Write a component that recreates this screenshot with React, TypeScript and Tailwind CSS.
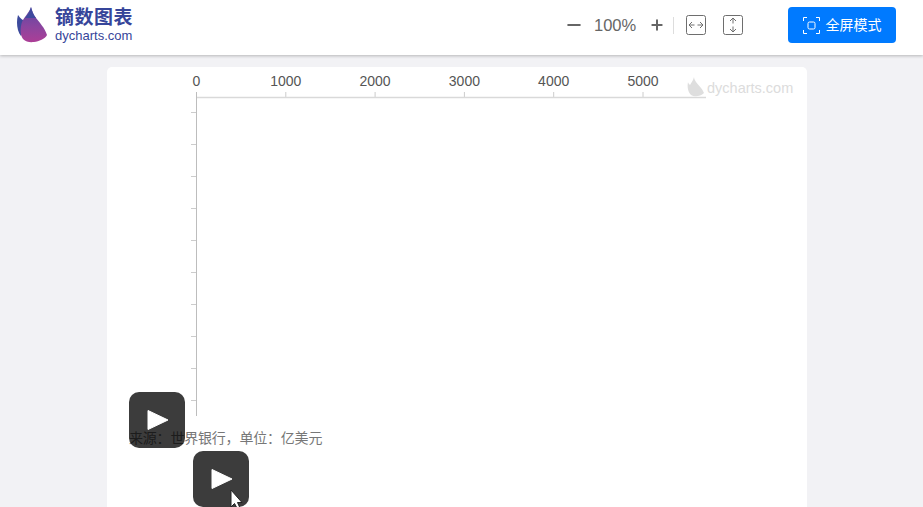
import { Minus, Plus } from "lucide-react";

const xTicks = [0, 1000, 2000, 3000, 4000, 5000];
const yTicks = [112, 144, 176, 208, 240, 272, 304, 336, 368, 400];
const cjk = "font-['Liberation_Sans','Noto_Sans_CJK_SC',sans-serif]";

function Logo() {
  return (
    <div className="flex items-center">
      <svg width="31" height="36" viewBox="0 0 31 36" className="mr-[7px]">
        <defs>
          <linearGradient id="logoFill" x1="0" y1="0" x2="0" y2="1">
            <stop offset="0" stopColor="#5a48a3" />
            <stop offset="0.55" stopColor="#8a459f" />
            <stop offset="1" stopColor="#ac3e96" />
          </linearGradient>
        </defs>
        <path d="M1 8C-1 15 0 24 4 29L10 14C6 14 3 11 1 8Z" fill="#3c4a9c" />
        <path d="M14 0C12 6 7 10 5 15C3 21 3 28 6 32C9 35 13 35.500 17 35C22 34.500 28 32 30 28C28 21 22 15 19 11C16 7 15 4 14 0Z" fill="url(#logoFill)" />
        <path d="M14 0C15 4 16 7 19 11L8 11C11 8 13 4 14 0Z" fill="#3f4a9e" />
      </svg>
      <div className="flex flex-col">
        <span className={`text-[19px] font-bold leading-[22px] tracking-[0.5px] text-[#36459a] ${cjk}`}>镝数图表</span>
        <span className="font-['Liberation_Sans',sans-serif] text-[13px] leading-[14px] text-[#36459a]">dycharts.com</span>
      </div>
    </div>
  );
}

function FitIcon({ vertical }: { vertical?: boolean }) {
  return (
    <svg width="20" height="20" viewBox="0 0 20 20" fill="none" stroke="#6e6e6e" strokeWidth="1">
      <rect x="0.5" y="0.5" width="19" height="19" rx="2" />
      {vertical ? (
        <path d="M10 3V8.500M7 6L10 3L13 6M10 11.500V17M7 14L10 17L13 14" />
      ) : (
        <path d="M3 10H8.500M6 7L3 10L6 13M11.500 10H17M14 7L17 10L14 13" />
      )}
    </svg>
  );
}

function PlayBadge({ className }: { className: string }) {
  return (
    <div className={`absolute flex h-14 w-14 items-center justify-center rounded-[10px] bg-black/[0.765] ${className}`}>
      <svg width="24" height="22" viewBox="0 0 24 22">
        <path d="M3 1.500L23 11L3 20.500Z" fill="#fff" stroke="#fff" strokeLinejoin="round" />
      </svg>
    </div>
  );
}

export default function App() {
  return (
    <div className="flex h-[507px] w-[923px] flex-col overflow-hidden bg-[#f2f2f5]">
      <header className="z-10 flex h-[55px] shrink-0 items-center bg-white pb-[5px] pl-[17px] pr-[27px] shadow-[0_1px_3px_rgba(0,0,0,0.25)]">
        <Logo />
        <div className="ml-auto flex items-center text-[#666]">
          <Minus size={20} strokeWidth={2.4} />
          <span className="ml-[10px] w-[43px] font-['Liberation_Sans',sans-serif] text-[16.5px] leading-none">100%</span>
          <Plus size={16} strokeWidth={3} className="ml-[12px]" />
          <div className="ml-[8px] mr-[12px] h-[17px] w-px bg-[#ddd]" />
          <FitIcon />
          <div className="w-[17px]" />
          <FitIcon vertical />
          <button className={`ml-[45px] flex h-9 w-[108px] items-center justify-center gap-[6px] rounded-[4px] bg-[#007aff] text-sm text-white ${cjk}`}>
            <svg width="17" height="17" viewBox="0 0 17 17" fill="none" stroke="#fff" strokeWidth="1">
              <path d="M0.500 4V0.500H4M13 0.500H16.500V4M16.500 13V16.500H13M4 16.500H0.500V13" />
              <rect x="5" y="5" width="7" height="7" rx="1.500" />
            </svg>
            全屏模式
          </button>
        </div>
      </header>

      <main className="ml-[107px] mt-3 w-[700px] flex-1 rounded-t-[5px] bg-white">
        <div className="relative">
          <svg width="700" height="361" viewBox="107 67 700 361" className="block">
            {xTicks.map((t, i) => {
              const x = 196.5 + i * 89.3;
              return (
                <g key={t}>
                  <text x={x} y="86" textAnchor="middle" fontFamily="Liberation Sans" fontSize="14" fill="#555">{t}</text>
                  {i > 0 && <line x1={x} x2={x} y1="92" y2="97" stroke="#ccc" />}
                </g>
              );
            })}
            <line x1="196" x2="706" y1="97.500" y2="97.500" stroke="#d9d9d9" strokeWidth="1.500" />
            <line x1="196.500" x2="196.500" y1="92" y2="416" stroke="#bdbdbd" />
            {yTicks.map((y) => (
              <line key={y} x1="191" x2="196" y1={y + 0.5} y2={y + 0.5} stroke="#ccc" />
            ))}
            <path d="M688 82C687 87 688 92 691 95C694 97 700 97 704 93C702 88 698 85 696 82C695 80 694 79 694 77C693 81 691 83 690 85C689 84 688 83 688 82Z" fill="#dedede" />
            <text x="707" y="93" fontFamily="Liberation Sans" fontSize="14.500" fill="#dcdcdc">dycharts.com</text>
          </svg>
          <p className={`pl-[22px] text-[14px] leading-5 tracking-[-0.2px] text-[#777] ${cjk}`}>来源：世界银行，单位：亿美元</p>
          <PlayBadge className="left-[22px] top-[325px]" />
          <PlayBadge className="left-[86px] top-[384px]" />
          <svg width="14" height="22" viewBox="0 0 14 22" className="absolute left-[123px] top-[422px]">
            <path d="M1 1V18L4.500 14.500L7.500 20L10 19L7.500 13.500H12Z" fill="#fff" stroke="#222" strokeWidth="1" />
          </svg>
        </div>
      </main>
    </div>
  );
}
